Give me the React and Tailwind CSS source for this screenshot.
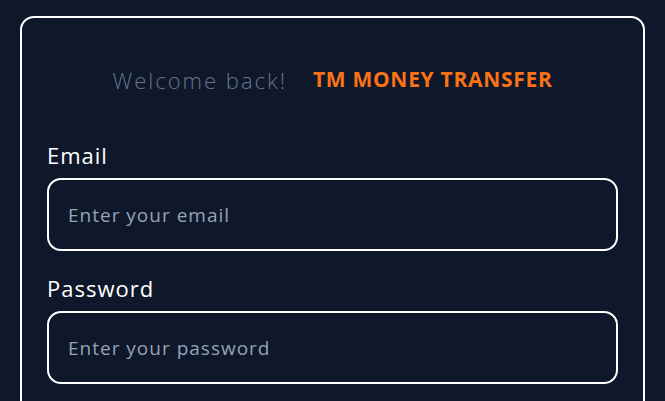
const Field = ({ label, type, placeholder }) => (
  <div className="flex flex-col">
    <label className="text-[22px] leading-[28px] tracking-[1px] text-white mb-[9px]">{label}</label>
    <input
      type={type}
      placeholder={placeholder}
      className="h-[73px] w-full rounded-[14px] border-2 border-white bg-transparent px-[19px] text-[19px] tracking-[1px] text-white placeholder:text-[#94a3b8] outline-none"
    />
  </div>
);

export default function App() {
  return (
    <div
      className="min-h-screen bg-[#0f172a] pt-4 px-5"
      style={{ fontFamily: '"Open Sans", "DejaVu Sans", sans-serif' }}
    >
      <div className="rounded-[14px] border-2 border-white p-[25px] pb-10">
        <div className="h-[74px] flex items-center justify-center gap-[26px]">
          <span className="text-[22px] font-light tracking-[2px] text-[#64748b]">Welcome back!</span>
          <span className="text-[21px] font-bold tracking-[0.7px] text-[#f97316]">TM MONEY TRANSFER</span>
        </div>
        <div className="mt-6 flex flex-col gap-[23px]">
          <Field label="Email" type="email" placeholder="Enter your email" />
          <Field label="Password" type="password" placeholder="Enter your password" />
        </div>
      </div>
    </div>
  );
}
